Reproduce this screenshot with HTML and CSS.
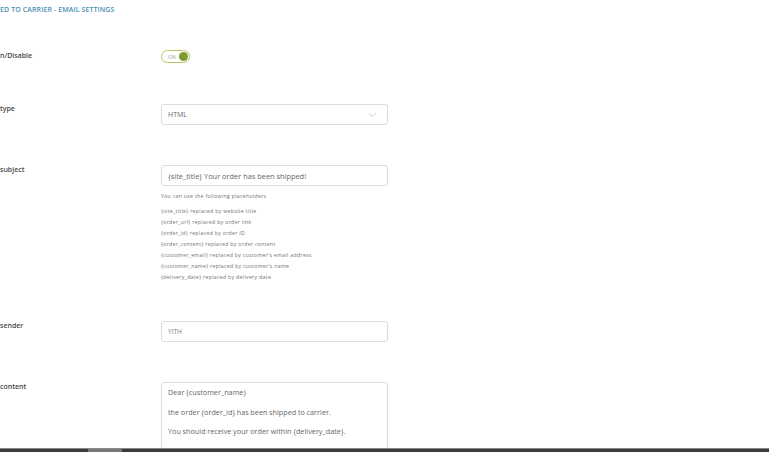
FILE: index.html
```html
<html>
  <head>
    <link rel="stylesheet" href="styles.css">
  </head>
  <body>
    <div class="wrap">
      <h3 class="title">ED TO CARRIER - EMAIL SETTINGS</h3>

      <div class="row">
        <label class="label_toggle">n/Disable</label>
        <div class="field">
          <span class="toggle"><span class="toggle_txt">ON</span><span class="knob"></span></span>
        </div>
      </div>

      <div class="row">
        <label>type</label>
        <div class="field">
          <div class="select">
            HTML
            <svg class="chev" width="9" height="6" viewBox="0 0 9 6"><path d="M1 1 L4.5 4.5 L8 1" fill="none" stroke="#d0d0d0" stroke-width="1"/></svg>
          </div>
        </div>
      </div>

      <div class="row">
        <label>subject</label>
        <div class="field">
          <div class="input">{site_title} Your order has been shipped!</div>
          <div class="help">
            <p class="help_head">You can use the following placeholders</p>
            <p>{site_title} replaced by website title</p>
            <p>{order_url} replaced by order link</p>
            <p>{order_id} replaced by order ID</p>
            <p>{order_content} replaced by order content</p>
            <p>{customer_email} replaced by customer's email address</p>
            <p>{customer_name} replaced by customer's name</p>
            <p>{delivery_date} replaced by delivery date</p>
          </div>
        </div>
      </div>

      <div class="row">
        <label>sender</label>
        <div class="field">
          <div class="input input_dim">YITH</div>
        </div>
      </div>

      <div class="row">
        <label>content</label>
        <div class="field">
          <div class="textarea">
            <p>Dear {customer_name}</p>
            <p>the order {order_id} has been shipped to carrier.</p>
            <p>You should receive your order within {delivery_date}.</p>
            <p>&nbsp;</p>
          </div>
        </div>
      </div>
    </div>
    <div class="bottombar"><span class="bar_thumb"></span></div>
  </body>
</html>
```

FILE: styles.css
```css
body {
  margin: 0;
  background-color: #fff;
  font-family: "Open Sans", "Noto Sans", sans-serif;
  color: #444;
  overflow: hidden;
}
.wrap {
  padding-top: 4px;
}
.title {
  margin: 0 0 35px 0;
  font-size: 7px;
  font-weight: 600;
  color: #4c8fb3;
  letter-spacing: 0.1px;
  line-height: 11px;
}
.row {
  display: grid;
  grid-template-columns: 161px 227px;
  padding-bottom: 40px;
}
.row label {
  font-size: 7px;
  font-weight: 600;
  color: #484848;
  line-height: 10px;
}
.row .label_toggle {
  padding-top: 1px;
}
.toggle {
  display: flex;
  align-items: center;
  justify-content: space-between;
  width: 29px;
  height: 13px;
  box-sizing: border-box;
  border: 1px solid #b4c166;
  border-radius: 7px;
  padding: 0 1px 0 6px;
  margin-bottom: 1px;
}
.toggle_txt {
  font-size: 5px;
  color: #999;
}
.knob {
  width: 9px;
  height: 9px;
  border-radius: 50%;
  background-color: #7f9b2b;
}
.select,
.input {
  display: flex;
  align-items: center;
  justify-content: space-between;
  height: 21px;
  box-sizing: border-box;
  border: 1px solid #dcdcdc;
  border-radius: 3px;
  padding: 0 10px 0 6px;
  font-size: 7px;
  color: #666;
}
.input {
  font-size: 7.4px;
}
.input_dim {
  font-size: 6.5px;
  color: #777;
}
.chev {
  margin-top: 1px;
}
.help {
  padding-top: 5px;
  margin-bottom: -2px;
  font-size: 5.2px;
  letter-spacing: 0.3px;
  color: #707070;
}
.help p {
  margin: 0;
  line-height: 11px;
}
.help .help_head {
  margin-bottom: 4px;
}
.textarea {
  height: 80px;
  box-sizing: border-box;
  border: 1px solid #dcdcdc;
  border-radius: 3px;
  padding: 0 6px;
  font-size: 7.2px;
  letter-spacing: 0.05px;
  word-spacing: -0.3px;
  color: #666;
}
.textarea p {
  margin: 0;
  line-height: 19.5px;
}
.bottombar {
  position: fixed;
  left: 0;
  right: 0;
  bottom: 0;
  height: 3px;
  background-color: #3a3a3a;
  border-top: 1px solid #888;
}
.bar_thumb {
  display: block;
  margin-left: 88px;
  width: 34px;
  height: 3px;
  background-color: #777;
}
```
